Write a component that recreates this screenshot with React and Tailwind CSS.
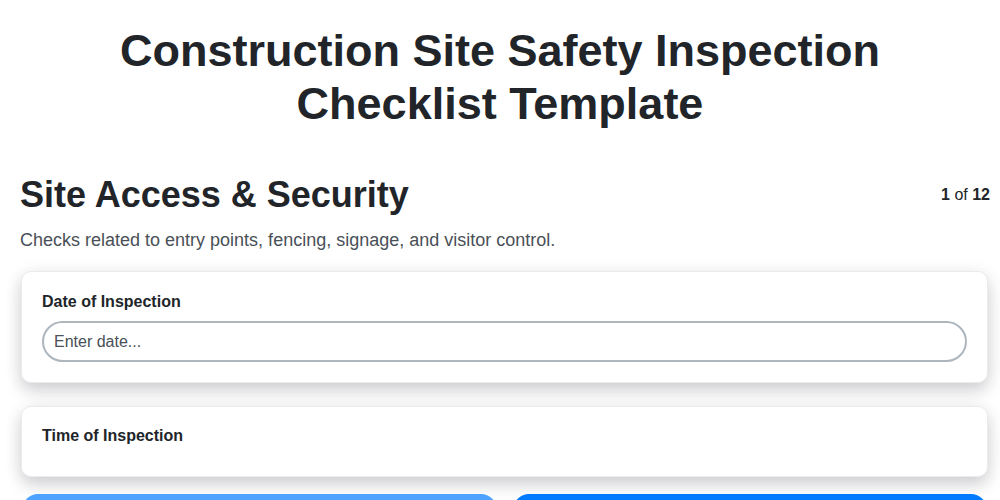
import React, { useState } from "react";

export default function App() {
    const [date, setDate] = useState("");

    return (
        <div className="h-screen overflow-hidden bg-white px-5 pt-6 text-[#212529]" style={{ fontFamily: '"Liberation Sans", Arial, sans-serif' }}>
            <h1 className="mx-auto max-w-[800px] text-center text-[45px] font-bold leading-[53px]">
                Construction Site Safety Inspection Checklist Template
            </h1>

            <div className="mr-[-10px]">
                <div className="mt-[43px] flex items-start justify-between">
                    <h2 className="text-[36px] font-bold leading-[44px]">Site Access &amp; Security</h2>
                    <div className="pt-[10px] text-[16px]">
                        <span className="font-bold">1</span> of <span className="font-bold">12</span>
                    </div>
                </div>
                <p className="mt-[11px] text-[18px] leading-[24px] text-[#495057]">
                    Checks related to entry points, fencing, signage, and visitor control.
                </p>

                <div className="ml-[1px] mr-[2px] mt-[19px] rounded-[10px] border border-[#e9ecef] bg-white p-5 shadow-[0_8px_16px_rgba(20,20,40,0.18),0_0_20px_rgba(0,0,0,0.05)]">
                    <label className="block text-[16px] font-bold leading-[20px]">Date of Inspection</label>
                    <input
                        type="text"
                        value={date}
                        onChange={(e) => setDate(e.target.value)}
                        placeholder="Enter date..."
                        className="mt-[9px] h-[41px] w-full rounded-full border-2 border-[#adb5bd] px-[10px] text-[16px] text-[#495057] placeholder:text-[#495057] outline-none"
                    />
                </div>

                <div className="ml-[1px] mr-[2px] mt-[23px] h-[71px] rounded-[10px] border border-[#e9ecef] bg-white px-5 pt-[19px] shadow-[0_8px_16px_rgba(20,20,40,0.18),0_0_20px_rgba(0,0,0,0.05)]">
                    <label className="block text-[16px] font-bold leading-[20px]">Time of Inspection</label>
                </div>

                <div className="ml-[2px] mr-[3px] mt-[17px] flex gap-4">
                    <button className="h-[44px] flex-1 rounded-[16px] bg-[#4da3ff] text-white" disabled>
                        Previous
                    </button>
                    <button className="h-[44px] flex-1 rounded-[16px] bg-[#007bff] text-white">Next</button>
                </div>
            </div>
        </div>
    );
}
